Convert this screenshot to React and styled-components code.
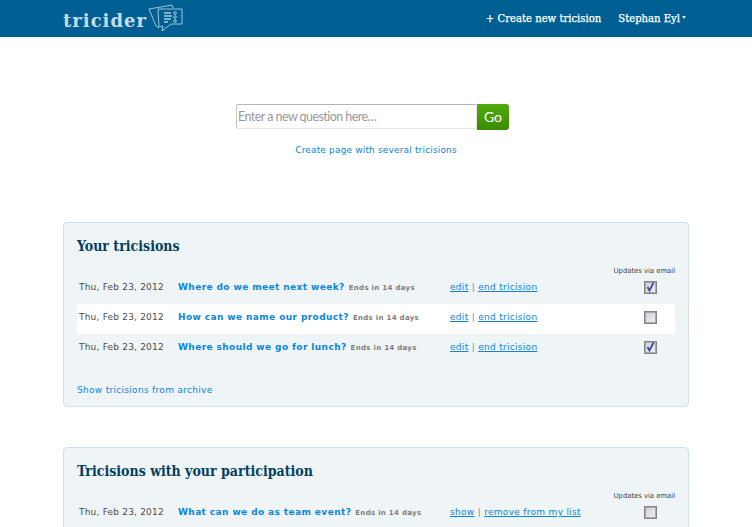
import React from 'react'
import styled, { createGlobalStyle } from 'styled-components';

const GlobalStyle = createGlobalStyle`
html, body {
  margin: 0;
  padding: 0;
  height: 527px;
  overflow: hidden;
  background: #fff;
  font-family: "DejaVu Sans", Verdana, sans-serif;
}
`;

const TopBar = styled.div`
height: 37px;
background-color: #005f92;
display: flex;
justify-content: space-between;
align-items: center;
padding: 0 66px 0 63px;
`;

const Logo = styled.div`
display: flex;
align-items: center;
gap: 1px;
`;

const LogoText = styled.span`
margin-top: 3px;
font-family: "DejaVu Serif", serif;
font-weight: bold;
font-size: 18px;
letter-spacing: 1px;
color: #c3dce9;
`;

const LogoMark = styled.svg`
margin-top: -2px;
`;

const Nav = styled.div`
display: flex;
gap: 17px;
font-family: "DejaVu Serif Condensed", "Liberation Serif", serif;
font-size: 11.2px;
-webkit-text-stroke: 0.25px #fff;
color: #fff;
`;

const Caret = styled.span`
display: inline-block;
border: 2.5px solid transparent;
border-top: 3px solid #d5e4ec;
border-bottom: 0;
margin-left: 2px;
vertical-align: 3px;
`;

const SearchArea = styled.div`
display: flex;
flex-direction: column;
align-items: center;
padding-top: 67px;
height: 118px;
`;

const SearchBox = styled.div`
display: flex;
width: 273px;
height: 26px;
margin-right: 7px;
`;

const SearchInput = styled.div`
flex: 1;
box-sizing: border-box;
height: 25px;
border: 1px solid #e6e6e6;
border-top: 1px solid #b5b5b5;
border-left: 1px solid #c4c4c4;
border-radius: 2px 0 0 2px;
padding-left: 1px;
font-family: Lato, sans-serif;
font-size: 12.5px;
letter-spacing: -0.55px;
line-height: 23px;
color: #9a9a9a;
`;

const GoButton = styled.div`
width: 32px;
background: linear-gradient(#50ab0c, #3b8c00);
border-radius: 0 3px 3px 0;
color: #fff;
text-align: center;
font-family: Lato, sans-serif;
font-size: 14px;
line-height: 26px;
`;

const SeveralLink = styled.a`
margin-top: 15px;
font-size: 9px;
letter-spacing: 0.16px;
color: #0a86dc;
`;

const Cards = styled.div`
display: flex;
flex-direction: column;
gap: 40px;
margin: 0 63px;
`;

const Card = styled.section`
box-sizing: border-box;
background: #eff4f7;
border: 1px solid #cfe1ec;
border-radius: 4px;
padding: 13px 13px 9px;
`;

const CardTitle = styled.h2`
margin: 0;
height: 28px;
font-family: "DejaVu Serif Condensed", "Liberation Serif", serif;
font-size: 14px;
line-height: 20px;
font-weight: bold;
color: #04405f;
`;

const UpdatesLabel = styled.div`
text-align: right;
font-size: 7px;
line-height: 14px;
height: 10px;
letter-spacing: -0.1px;
color: #444;
`;

const Row = styled.div`
box-sizing: border-box;
display: grid;
grid-template-columns: 99px 272px 1fr 32px;
align-items: center;
height: 30px;
padding: 0 0 4px 2px;
background: ${(p) => (p.$white ? '#fff' : 'transparent')};
`;

const DateCell = styled.span`
font-size: 9px;
letter-spacing: 0.2px;
color: #4d4d4d;
`;

const TitleCell = styled.span`
font-size: 9px;
line-height: 12px;
white-space: nowrap;
`;

const Question = styled.a`
font-size: 9px;
font-weight: bold;
letter-spacing: 0.4px;
color: #0a86dc;
`;

const Ends = styled.span`
margin-left: 4px;
font-size: 7px;
font-weight: bold;
letter-spacing: 0.3px;
color: #7d7d7d;
`;

const Actions = styled.span`
font-size: 9px;
letter-spacing: 0.3px;
color: #8a8a8a;
white-space: nowrap;
`;

const ActionLink = styled.a`
color: #0a86dc;
text-decoration: underline;
`;

const CheckBox = styled.span`
box-sizing: border-box;
display: flex;
width: 13px;
height: 13px;
margin-left: 1px;
border: 1px solid #858585;
box-shadow: inset 0 0 0 1px #a9a9a9;
background: linear-gradient(135deg, #c9ccd6, #f4f4f6);
align-items: center;
justify-content: center;
`;

const ArchiveLink = styled.a`
display: block;
margin-top: 19px;
height: 14px;
line-height: 14px;
font-size: 9px;
letter-spacing: 0.3px;
color: #0a86dc;
`;

function LogoIcon() {
  return (
    <LogoMark width="35" height="28" viewBox="0 0 35 28" fill="none" stroke="#c3dce9" strokeWidth="0.8">
      <path d="M1 5 L24 1 L25 4 M1 5 L8 22 L11 24" />
      <path d="M10 5 L34 5 L34 20 L23 20 L14 27 L15 22 L11 23 Z" />
      <path d="M16 9 H23 M16 12 H24 M16 15 H23 M16 18 H20" strokeWidth="1.2" stroke="#fff" />
      <circle cx="27" cy="9" r="1.3" />
      <circle cx="27" cy="13" r="1.3" />
      <circle cx="27" cy="17" r="1.3" />
    </LogoMark>
  );
}

function Check({ checked }) {
  return (
    <CheckBox>
      {checked && (
        <svg width="9" height="10" viewBox="0 0 9 10" fill="none">
          <path d="M1.5 5 L3.5 8.5 L7.5 0.5" stroke="#3c4e98" strokeWidth="1.8" />
        </svg>
      )}
    </CheckBox>
  );
}

function TricisionRow({ title, actions, checked, white }) {
  return (
    <Row $white={white}>
      <DateCell>Thu, Feb 23, 2012</DateCell>
      <TitleCell>
        <Question>{title}</Question>
        <Ends>Ends in 14 days</Ends>
      </TitleCell>
      <Actions>
        <ActionLink>{actions[0]}</ActionLink> | <ActionLink>{actions[1]}</ActionLink>
      </Actions>
      <Check checked={checked} />
    </Row>
  );
}

const OWN = ['edit', 'end tricision'];

function App() {
  return (
    <>
      <GlobalStyle />
      <TopBar>
        <Logo>
          <LogoText>tricider</LogoText>
          <LogoIcon />
        </Logo>
        <Nav>
          <span>+ Create new tricision</span>
          <span>Stephan Eyl<Caret /></span>
        </Nav>
      </TopBar>
      <SearchArea>
        <SearchBox>
          <SearchInput>Enter a new question here…</SearchInput>
          <GoButton>Go</GoButton>
        </SearchBox>
        <SeveralLink>Create page with several tricisions</SeveralLink>
      </SearchArea>
      <Cards>
        <Card>
          <CardTitle>Your tricisions</CardTitle>
          <UpdatesLabel>Updates via email</UpdatesLabel>
          <TricisionRow title="Where do we meet next week?" actions={OWN} checked />
          <TricisionRow title="How can we name our product?" actions={OWN} white />
          <TricisionRow title="Where should we go for lunch?" actions={OWN} checked />
          <ArchiveLink>Show tricisions from archive</ArchiveLink>
        </Card>
        <Card>
          <CardTitle>Tricisions with your participation</CardTitle>
          <UpdatesLabel>Updates via email</UpdatesLabel>
          <TricisionRow title="What can we do as team event?" actions={['show', 'remove from my list']} />
        </Card>
      </Cards>
    </>
  )
}

export default App
